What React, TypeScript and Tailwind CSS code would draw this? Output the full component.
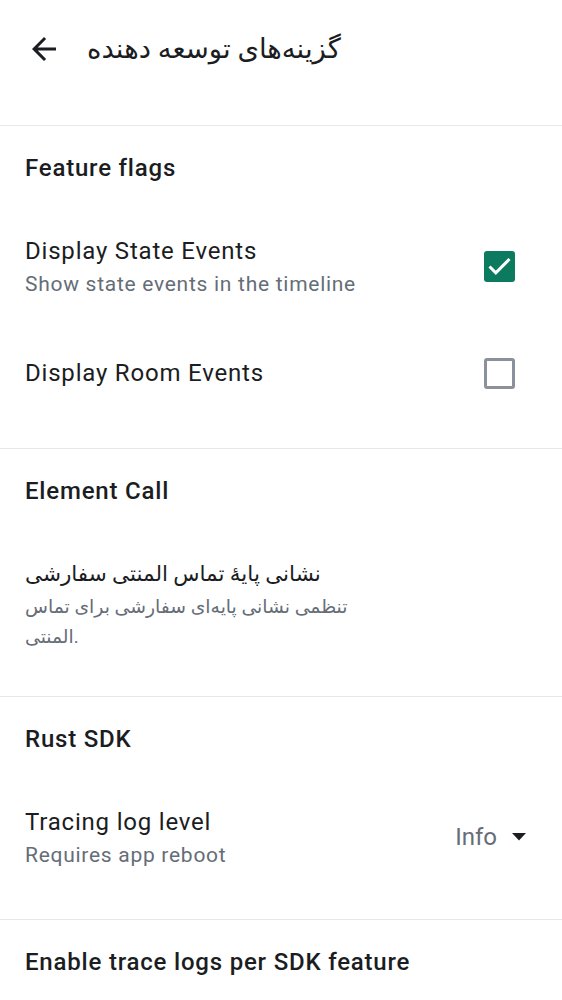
import React from "react";

function Divider() {
  return <div className="h-px bg-[#e7e8ec] w-full" />;
}

function Checkbox({ checked }: { checked: boolean }) {
  if (checked) {
    return (
      <div className="w-[31px] h-[31px] rounded-[3px] bg-[#0b7a5f] shrink-0">
        <svg width="31" height="31" viewBox="0 0 31 31">
          <path d="M5.5 15.5 L11.8 21.8 L25.5 8" fill="none" stroke="#ffffff" strokeWidth="3" strokeLinecap="butt" strokeLinejoin="miter" />
        </svg>
      </div>
    );
  }
  return <div className="w-[31px] h-[31px] rounded-[3px] border-[3px] border-[#8a919c] shrink-0" />;
}

export default function App() {
  return (
    <div className="w-[562px] min-h-[1000px] bg-white font-['Roboto','Noto_Sans','DejaVu_Sans',sans-serif] text-[#1b1d22] overflow-hidden">
      <header className="h-[98px] flex items-center">
        <svg className="ml-[26px] w-[36px] h-[36px] shrink-0" viewBox="0 0 24 24">
          <path fill="#1b1d22" d="M20 11H7.83l5.59-5.59L12 4l-8 8 8 8 1.41-1.41L7.83 13H20v-2z" />
        </svg>
        <h1 className="ml-[25px] text-[27.5px] leading-[36px] font-normal">گزینه‌های توسعه دهنده</h1>
      </header>
      <div className="h-[27px]" />
      <Divider />

      <section className="pb-[29px]">
        <h2 className="px-[25px] pt-[24px] pb-[19px] text-[24px] leading-[36px] font-medium tracking-[0.8px]">Feature flags</h2>
        <div className="py-[28px] pl-[25px] pr-[47px] flex items-center justify-between">
          <div className="flex flex-col">
            <span className="text-[24px] leading-[36px] tracking-[0.8px]">Display State Events</span>
            <span className="text-[21px] leading-[30px] text-[#656d77] tracking-[0.72px]">Show state events in the timeline</span>
          </div>
          <Checkbox checked />
        </div>
        <div className="py-[28px] pl-[25px] pr-[47px] flex items-center justify-between">
          <span className="text-[24px] leading-[36px] tracking-[0.8px]">Display Room Events</span>
          <Checkbox checked={false} />
        </div>
      </section>
      <Divider />

      <section className="pb-[16px]">
        <h2 className="px-[25px] pt-[24px] pb-[19px] text-[24px] leading-[36px] font-medium tracking-[0.8px]">Element Call</h2>
        <div className="py-[28px] px-[25px] flex flex-col">
          <span className="text-[21.5px] leading-[36px]">نشانی پایهٔ تماس المنتی سفارشی</span>
          <span className="text-[18.8px] leading-[30px] text-[#656d77]">
            تنظمی نشانی پایه‌ای سفارشی برای تماس
            <br />
            المنتی.
          </span>
        </div>
      </section>
      <Divider />

      <section className="pb-[21px]">
        <h2 className="px-[25px] pt-[24px] pb-[19px] text-[24px] leading-[36px] font-medium tracking-[0.8px]">Rust SDK</h2>
        <div className="py-[28px] pl-[25px] pr-[36px] flex items-center justify-between">
          <div className="flex flex-col">
            <span className="text-[24px] leading-[36px] tracking-[0.8px]">Tracing log level</span>
            <span className="text-[21px] leading-[30px] text-[#656d77] tracking-[0.72px]">Requires app reboot</span>
          </div>
          <div className="flex items-center gap-[15px]">
            <span className="text-[24px] leading-[36px] text-[#656d77]">Info</span>
            <svg width="14" height="8" viewBox="0 0 14 8">
              <polygon points="0,0 14,0 7,7.5" fill="#1b1d22" />
            </svg>
          </div>
        </div>
      </section>
      <Divider />

      <section>
        <h2 className="px-[25px] pt-[24px] pb-[19px] text-[24px] leading-[36px] font-medium tracking-[0.8px]">Enable trace logs per SDK feature</h2>
      </section>
    </div>
  );
}
